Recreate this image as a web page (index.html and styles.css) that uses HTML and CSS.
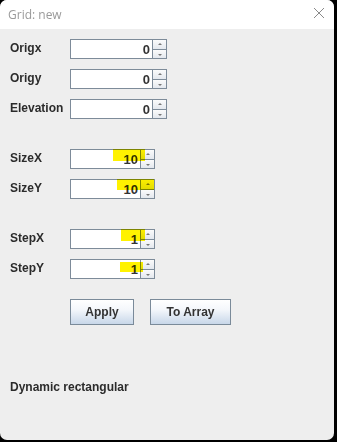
FILE: index.html
```html
<!DOCTYPE html>
<html lang="en">
<head>
    <meta charset="UTF-8">
    <title>Grid: new</title>
    <link rel="stylesheet" href="styles.css">
</head>
<body>
    <div class="window">
        <div class="titlebar">
            <span class="title">Grid: new</span>
            <svg class="close" width="12" height="12" viewBox="0 0 12 12">
                <path d="M1 1 L11 11 M11 1 L1 11" stroke="#8a8a8a" stroke-width="1" fill="none"/>
            </svg>
        </div>

        <div class="content">
            <div class="row">
                <label>Origx</label>
                <div class="spinner wide"><div class="field">0</div><div class="arrows"><span class="up"></span><span class="down"></span></div></div>
            </div>
            <div class="row">
                <label>Origy</label>
                <div class="spinner wide"><div class="field">0</div><div class="arrows"><span class="up"></span><span class="down"></span></div></div>
            </div>
            <div class="row">
                <label>Elevation</label>
                <div class="spinner wide"><div class="field">0</div><div class="arrows"><span class="up"></span><span class="down"></span></div></div>
            </div>

            <div class="group">
                <div class="row">
                    <label>SizeX</label>
                    <div class="spinner"><div class="field">10</div><div class="arrows"><span class="up"></span><span class="down"></span></div><i class="mark m1"></i></div>
                </div>
                <div class="row">
                    <label>SizeY</label>
                    <div class="spinner"><div class="field">10</div><div class="arrows"><span class="up"></span><span class="down"></span></div><i class="mark m2"></i></div>
                </div>
            </div>

            <div class="group">
                <div class="row">
                    <label>StepX</label>
                    <div class="spinner"><div class="field">1</div><div class="arrows"><span class="up"></span><span class="down"></span></div><i class="mark m3"></i></div>
                </div>
                <div class="row">
                    <label>StepY</label>
                    <div class="spinner"><div class="field">1</div><div class="arrows"><span class="up"></span><span class="down"></span></div><i class="mark m4"></i></div>
                </div>
            </div>

            <div class="buttons">
                <button class="apply">Apply</button>
                <button class="to-array">To Array</button>
            </div>

            <div class="mode">Dynamic rectangular</div>
        </div>
    </div>
</body>
</html>
```

FILE: styles.css
```css
html, body {
    margin: 0;
    padding: 0;
    background-color: #000;
}
body {
    width: 337px;
    height: 442px;
    overflow: hidden;
    font-family: "Liberation Sans", Arial, sans-serif;
}
.window {
    width: 334px;
    height: 440px;
    background-color: #eeeeee;
    border-radius: 7px;
    overflow: hidden;
    display: flex;
    flex-direction: column;
}
.titlebar {
    height: 29px;
    background-color: #fff;
    display: flex;
    align-items: center;
    justify-content: space-between;
    padding: 0 9px 0 8px;
}
.title {
    font-family: "Open Sans", "Noto Sans", sans-serif;
    font-size: 12px;
    color: #9a9a9a;
    margin-top: -1px;
}
.close {
    margin-top: -3px;
}
.content {
    padding: 10px 0 0 10px;
    display: flex;
    flex-direction: column;
    gap: 10px;
}
.group {
    margin-top: 20px;
    display: flex;
    flex-direction: column;
    gap: 10px;
}
.row {
    display: flex;
    align-items: center;
    height: 20px;
}
label {
    width: 60px;
    font-size: 12px;
    font-weight: bold;
    color: #2b2b2b;
    margin-top: -2px;
}
.spinner {
    position: relative;
    display: flex;
    height: 20px;
}
.field {
    width: 70px;
    box-sizing: border-box;
    height: 20px;
    background-color: #fff;
    border: 1px solid #7d8b99;
    border-right: none;
    text-align: right;
    padding-right: 2px;
    font-size: 13px;
    font-weight: bold;
    line-height: 19px;
    color: #333;
}
.spinner.wide .field {
    width: 82px;
}
.arrows {
    width: 15px;
    display: flex;
    flex-direction: column;
}
.arrows span {
    flex: 1;
    box-sizing: border-box;
    border: 1px solid #7d8b99;
    background: linear-gradient(#fbfbfb, #e4e8ee);
    position: relative;
}
.arrows .down {
    border-top: none;
}
.arrows span:after {
    content: "";
    position: absolute;
    left: 5px;
    width: 0;
    height: 0;
    border-left: 2px solid transparent;
    border-right: 2px solid transparent;
}
.arrows .up:after {
    top: 3px;
    border-bottom: 2px solid #777;
}
.arrows .down:after {
    top: 4px;
    border-top: 2px solid #777;
}
.mark {
    position: absolute;
    background-color: #fff200;
    mix-blend-mode: multiply;
}
.m1 { left: 43px; top: 0; width: 32px; height: 12px; }
.m2 { left: 47px; top: 0; width: 37px; height: 11px; }
.m3 { left: 51px; top: 0; width: 24px; height: 12px; }
.m4 { left: 50px; top: 3px; width: 23px; height: 10px; }
.buttons {
    margin-top: 10px;
    padding-left: 60px;
    display: flex;
    gap: 16px;
}
button {
    height: 26px;
    box-sizing: border-box;
    border: 1px solid #7a8a99;
    background: linear-gradient(#ffffff, #f4f7fb 40%, #c8d7e9);
    font-family: "Liberation Sans", Arial, sans-serif;
    font-size: 12px;
    font-weight: bold;
    color: #333;
    padding: 0;
}
.apply {
    width: 64px;
}
.to-array {
    width: 81px;
}
.mode {
    margin-top: 45px;
    font-size: 12px;
    font-weight: bold;
    color: #2b2b2b;
}
```
